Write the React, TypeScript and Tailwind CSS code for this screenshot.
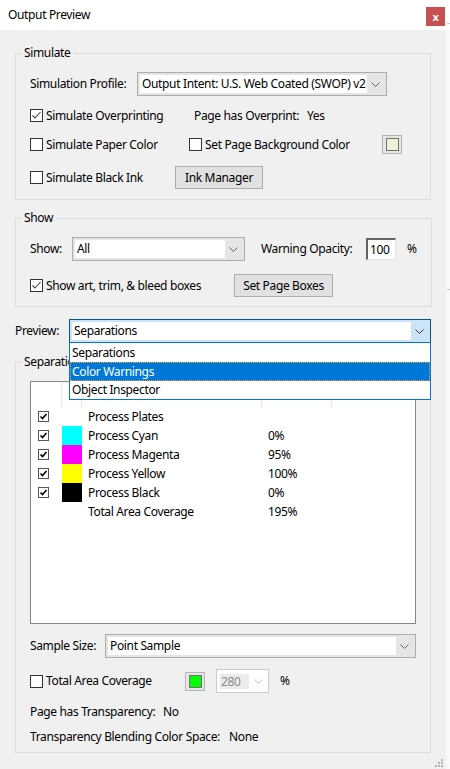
import React from "react";

function Chevron({ color = "#606060" }: { color?: string }) {
  return (
    <svg width="9" height="5" viewBox="0 0 9 5">
      <polyline points="0.5,0.5 4.5,4.5 8.5,0.5" fill="none" stroke={color} strokeWidth="1" />
    </svg>
  );
}

function Check({ checked }: { checked?: boolean }) {
  return (
    <span className="w-[13px] h-[13px] border border-[#333333] bg-white flex items-center justify-center shrink-0">
      {checked && (
        <svg width="11" height="11" viewBox="0 0 11 11">
          <polyline points="1.5,5.5 4,8 9.5,2" fill="none" stroke="#444444" strokeWidth="1.1" />
        </svg>
      )}
    </span>
  );
}

function SmallCheck() {
  return (
    <span className="w-[11px] h-[11px] border border-[#555555] bg-white flex items-center justify-center shrink-0">
      <svg width="9" height="9" viewBox="0 0 9 9">
        <polyline points="1.5,4.5 3.5,6.5 7.5,2" fill="none" stroke="#000000" strokeWidth="1.6" />
      </svg>
    </span>
  );
}

function Select({ w, text }: { w: string; text: string }) {
  return (
    <div className={`h-[24px] border border-[#adadad] bg-[#e5e5e5] flex p-[2px] shrink-0 ${w}`}>
      <div className="flex-1 bg-white flex items-center pl-[2px] overflow-hidden whitespace-nowrap">{text}</div>
      <div className="w-[17px] flex items-center justify-center">
        <Chevron />
      </div>
    </div>
  );
}

function Button({ w, children }: { w: string; children: React.ReactNode }) {
  return (
    <div className={`h-[23px] border border-[#adadad] bg-[#e1e1e1] flex items-center justify-center shrink-0 ${w}`}>
      {children}
    </div>
  );
}

function Swatch({ color }: { color: string }) {
  return (
    <div className="w-[20px] h-[19px] border border-[#b4b4b4] bg-[#e6e6e6] flex items-center justify-center shrink-0">
      <div className="w-[13px] h-[13px] border border-[#707070]" style={{ backgroundColor: color }} />
    </div>
  );
}

const plates = [
  { name: "Process Plates", color: "", pct: "" },
  { name: "Process Cyan", color: "bg-[#00ffff]", pct: "0%" },
  { name: "Process Magenta", color: "bg-[#ff00ff]", pct: "95%" },
  { name: "Process Yellow", color: "bg-[#ffff00]", pct: "100%" },
  { name: "Process Black", color: "bg-[#000000]", pct: "0%" },
];

export default function App() {
  return (
    <div className="w-[450px] h-[769px] flex overflow-hidden font-['Noto_Sans',sans-serif] text-[12px] tracking-[-0.35px] text-black leading-none whitespace-nowrap">
      <div className="w-[446px] flex flex-col bg-[#f0f0f0]">
        <div className="h-[30px] bg-white flex justify-between shrink-0">
          <span className="ml-[8px] self-center">Output Preview</span>
          <div className="mt-[7px] mr-[1px] w-[19px] h-[19px] bg-[#c75050] text-white flex items-center justify-center text-[11px] font-bold">
            x
          </div>
        </div>

        {/* Simulate */}
        <fieldset className="mt-[14px] ml-[15px] w-[416px] border border-[#dcdcdc]">
          <legend className="ml-[5px] px-[3px] leading-[18px]">Simulate</legend>
          <div className="px-[14px] pt-[10px] pb-[10px] flex flex-col">
            <div className="h-[24px] flex items-center">
              <span className="w-[107px]">Simulation Profile:</span>
              <Select w="w-[250px]" text="Output Intent: U.S. Web Coated (SWOP) v2" />
            </div>
            <div className="h-[39px] flex items-center">
              <div className="w-[164px] flex items-center gap-[3px]">
                <Check checked />
                <span>Simulate Overprinting</span>
              </div>
              <span className="w-[113px]">Page has Overprint:</span>
              <span>Yes</span>
            </div>
            <div className="h-[19px] flex items-center">
              <div className="w-[159px] flex items-center gap-[3px]">
                <Check />
                <span>Simulate Paper Color</span>
              </div>
              <div className="w-[193px] flex items-center gap-[3px]">
                <Check />
                <span>Set Page Background Color</span>
              </div>
              <Swatch color="#efefd6" />
            </div>
            <div className="mt-[12px] h-[23px] flex items-center">
              <div className="w-[145px] flex items-center gap-[3px]">
                <Check />
                <span>Simulate Black Ink</span>
              </div>
              <Button w="w-[88px]">Ink Manager</Button>
            </div>
          </div>
        </fieldset>

        {/* Show */}
        <fieldset className="mt-[9px] ml-[15px] w-[416px] border border-[#dcdcdc]">
          <legend className="ml-[5px] px-[3px] leading-[18px]">Show</legend>
          <div className="px-[14px] pt-[10px] pb-[9px] flex flex-col">
            <div className="h-[24px] flex items-center">
              <span className="w-[42px]">Show:</span>
              <Select w="w-[173px]" text="All" />
              <span className="ml-[16px] w-[105px]">Warning Opacity:</span>
              <div className="w-[30px] h-[22px] bg-white border-l-2 border-t-2 border-r border-b border-l-[#646464] border-t-[#646464] border-r-[#e3e3e3] border-b-[#e3e3e3] flex items-center pl-[2px]">
                100
              </div>
              <span className="ml-[11px]">%</span>
            </div>
            <div className="mt-[13px] h-[23px] flex items-center">
              <div className="w-[204px] flex items-center gap-[3px]">
                <Check checked />
                <span>Show art, trim, &amp; bleed boxes</span>
              </div>
              <Button w="w-[99px]">Set Page Boxes</Button>
            </div>
          </div>
        </fieldset>

        {/* Preview */}
        <div className="mt-[12px] pl-[15px] h-[24px] flex items-center relative z-10">
          <span className="w-[54px]">Preview:</span>
          <div className="relative w-[362px] h-[24px]">
            <div className="h-[24px] border border-[#005499] bg-[#cce4f7] flex p-[2px]">
              <div className="flex-1 bg-white flex items-center pl-[2px]">Separations</div>
              <div className="w-[17px] flex items-center justify-center">
                <Chevron color="#333333" />
              </div>
            </div>
            <div className="absolute left-0 top-[23px] w-[362px] border border-[#0078d7] bg-white flex flex-col">
              <div className="h-[19px] flex items-center pl-[2px]">Separations</div>
              <div className="h-[19px] flex items-center pl-[2px] bg-[#0078d7] text-white outline-1 outline-dotted outline-[#e9a23b] -outline-offset-1">
                Color Warnings
              </div>
              <div className="h-[18px] flex items-center pl-[2px]">Object Inspector</div>
            </div>
          </div>
        </div>

        {/* Separations */}
        <fieldset className="mt-[10px] ml-[15px] w-[416px] border border-[#dcdcdc]">
          <legend className="ml-[5px] px-[3px] leading-[18px]">Separations</legend>
          <div className="px-[14px] pt-[10px] pb-[6px] flex flex-col">
            <div className="w-[386px] h-[243px] border border-[#828790] bg-white flex flex-col">
              <div className="h-[25px] flex shrink-0">
                <div className="w-[31px] border-r border-[#e5e5e5]" />
                <div className="w-[20px] border-r border-[#e5e5e5]" />
                <div className="w-[180px] border-r border-[#e5e5e5]" />
                <div className="w-[70px] border-r border-[#e5e5e5]" />
              </div>
              {plates.map((p) => (
                <div key={p.name} className="h-[19px] flex items-center shrink-0">
                  <div className="w-[31px] pl-[7px] flex items-center">
                    <SmallCheck />
                  </div>
                  <div className={`w-[20px] h-[19px] ${p.color}`} />
                  <div className="w-[186px] pl-[6px]">{p.name}</div>
                  <div>{p.pct}</div>
                </div>
              ))}
              <div className="h-[19px] flex items-center shrink-0">
                <div className="w-[51px]" />
                <div className="w-[186px] pl-[6px]">Total Area Coverage</div>
                <div>195%</div>
              </div>
            </div>

            <div className="mt-[10px] h-[24px] flex items-center">
              <span className="w-[75px]">Sample Size:</span>
              <Select w="w-[311px]" text="Point Sample" />
            </div>

            <div className="mt-[11px] h-[24px] flex items-center">
              <div className="w-[155px] flex items-center gap-[3px]">
                <Check />
                <span>Total Area Coverage</span>
              </div>
              <Swatch color="#00ff00" />
              <div className="ml-[11px] w-[53px] h-[24px] border border-[#cccccc] bg-white flex pl-[3px] pt-[4px] pb-[3px]">
                <div className="w-[29px] bg-[#ebebeb] text-[#8a8a8a] flex items-center pl-[1px]">280</div>
                <div className="flex-1 flex items-center justify-center">
                  <Chevron color="#c0c0c0" />
                </div>
              </div>
              <span className="ml-[11px]">%</span>
            </div>

            <div className="mt-[9px] h-[19px] flex items-center">
              <span className="w-[133px]">Page has Transparency:</span>
              <span>No</span>
            </div>
            <div className="mt-[6px] h-[19px] flex items-center">
              <span className="w-[199px]">Transparency Blending Color Space:</span>
              <span>None</span>
            </div>
          </div>
        </fieldset>

        <div className="flex justify-end pr-[2px] mt-[6px]">
          <svg width="9" height="9" viewBox="0 0 9 9">
            <rect x="6" y="0" width="2" height="2" fill="#b4b4b4" />
            <rect x="3" y="3" width="2" height="2" fill="#b4b4b4" />
            <rect x="6" y="3" width="2" height="2" fill="#b4b4b4" />
            <rect x="0" y="6" width="2" height="2" fill="#b4b4b4" />
            <rect x="3" y="6" width="2" height="2" fill="#b4b4b4" />
            <rect x="6" y="6" width="2" height="2" fill="#b4b4b4" />
          </svg>
        </div>
      </div>

      <div className="w-[4px] flex flex-col bg-[#f9f9f9]">
        <div className="h-[30px] bg-white flex flex-col">
          <div className="mt-[23px] ml-[1px] h-[1px] bg-[#c8c8c8]" />
        </div>
        <div className="mt-[259px] ml-[1px] h-[1px] bg-[#c8c8c8]" />
      </div>
    </div>
  );
}
